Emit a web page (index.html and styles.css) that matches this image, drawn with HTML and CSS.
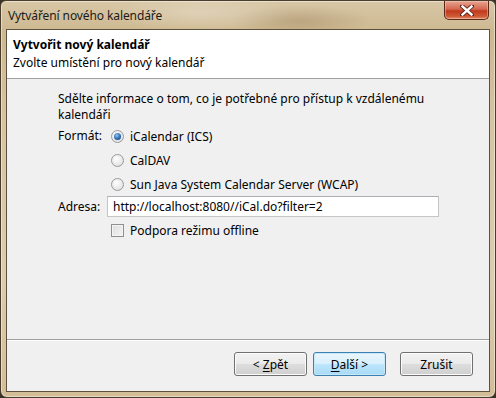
FILE: index.html
```html
<!DOCTYPE html>
<html lang="cs">
<head>
    <meta charset="UTF-8">
    <title>Vytváření nového kalendáře</title>
    <link rel="stylesheet" href="styles.css">
</head>
<body>

    <div class="window">
        <!-- Title bar -->
        <div class="titlebar">
            <span class="title">Vytváření nového kalendáře</span>
            <div class="close">
                <svg width="14" height="11" viewBox="0 0 14 11">
                    <path d="M2 1 L12 10 M12 1 L2 10" stroke="#5a2418" stroke-width="4.2" stroke-linecap="square"/>
                    <path d="M2.5 1.5 L11.5 9.5 M11.5 1.5 L2.5 9.5" stroke="#fff" stroke-width="2.4" stroke-linecap="square"/>
                </svg>
            </div>
        </div>

        <div class="client">
            <!-- Wizard header -->
            <div class="wiz-header">
                <div class="wiz-title">Vytvořit nový kalendář</div>
                <div class="wiz-sub">Zvolte umístění pro nový kalendář</div>
            </div>

            <!-- Page content -->
            <div class="wiz-body">
                <p class="intro">Sdělte informace o tom, co je potřebné pro přístup k vzdálenému kalendáři</p>

                <div class="form">
                    <span class="label fmt">Formát:</span>
                    <div class="options">
                        <div class="opt"><span class="radio checked"></span>iCalendar (ICS)</div>
                        <div class="opt"><span class="radio"></span>CalDAV</div>
                        <div class="opt"><span class="radio"></span>Sun Java System Calendar Server (WCAP)</div>
                    </div>

                    <span class="label">Adresa:</span>
                    <div class="field">http://localhost:8080//iCal.do?filter=2</div>

                    <span></span>
                    <div class="opt check-row"><span class="checkbox"></span>Podpora režimu offline</div>
                </div>
            </div>

            <!-- Buttons -->
            <div class="wiz-footer">
                <button class="btn"><span>&lt; <u>Z</u>pět</span></button>
                <button class="btn default"><span><u>D</u>alší &gt;</span></button>
                <button class="btn cancel">Zrušit</button>
            </div>
        </div>
    </div>

</body>
</html>
```

FILE: styles.css
```css
/* General Reset */
* {
    margin: 0;
    padding: 0;
    box-sizing: border-box;
    font-family: 'Noto Sans', 'Open Sans', sans-serif;
}

body {
    width: 496px;
    height: 398px;
    background: #3b3226;
    overflow: hidden;
    font-size: 12px;
    color: #000;
}

/* Window frame */
.window {
    width: 496px;
    height: 398px;
    display: flex;
    flex-direction: column;
    border: 1px solid #4a3d2c;
    border-radius: 6px 6px 7px 7px;
    padding: 0 5px 5px 5px;
    background:
        radial-gradient(ellipse 90px 20px at 200px 12px, rgba(255, 255, 255, 0.25), transparent),
        radial-gradient(ellipse 70px 16px at 300px 20px, rgba(120, 95, 60, 0.25), transparent),
        linear-gradient(180deg, #d8c7a6 0%, #cdb890 8%, #d6c4a1 30%, #dccdaf 70%, #d2bd96 100%);
    box-shadow: inset 0 0 0 1px rgba(255, 255, 255, 0.45);
}

.titlebar {
    height: 28px;
    display: flex;
    justify-content: space-between;
    align-items: flex-start;
}

.title {
    padding: 6px 0 0 2px;
    font-size: 12px;
    color: #1a1a1a;
    letter-spacing: -0.1px;
}

.close {
    width: 45px;
    height: 19px;
    margin-right: 1px;
    display: flex;
    justify-content: center;
    align-items: center;
    border: 1px solid #5c2a1c;
    border-top: none;
    border-radius: 0 0 5px 5px;
    background: linear-gradient(180deg, #e8a593 0%, #d4684f 45%, #c13a1e 55%, #cf5a35 85%, #e2926e 100%);
    box-shadow: inset 0 0 0 1px rgba(255, 220, 200, 0.4);
}

/* Client area */
.client {
    flex: 1;
    display: flex;
    flex-direction: column;
    background: #f0f0f0;
    border: 1px solid #5e503f;
}

.wiz-header {
    height: 49px;
    background: #fff;
    border-bottom: 1px solid #a0a0a0;
    padding: 6px 0 0 6px;
}

.wiz-title {
    font-weight: bold;
    height: 18px;
    line-height: 18px;
}

.wiz-sub {
    height: 18px;
    line-height: 18px;
}

.wiz-body {
    flex: 1;
    padding: 12px 40px 0 51px;
}

.intro {
    line-height: 16px;
    width: 400px;
}

.form {
    margin-top: 1px;
    display: grid;
    grid-template-columns: 49px 1fr;
    align-items: start;
}

.label {
    line-height: 21px;
}

.label.fmt {
    line-height: 24px;
}

.options {
    display: flex;
    flex-direction: column;
}

.opt {
    height: 24px;
    display: flex;
    align-items: center;
    gap: 6px;
    padding-left: 4px;
}

.radio {
    width: 13px;
    height: 13px;
    border-radius: 50%;
    border: 1px solid #9a9a9a;
    background: radial-gradient(circle at 40% 35%, #ffffff, #e4e4e4 70%, #d0d0d0);
    display: flex;
    justify-content: center;
    align-items: center;
}

.radio.checked::after {
    content: "";
    width: 7px;
    height: 7px;
    border-radius: 50%;
    background: radial-gradient(circle at 40% 35%, #8fc4f0, #2563ad 60%, #173f73);
}

.field {
    width: 332px;
    height: 21px;
    line-height: 19px;
    padding-left: 5px;
    background: #fff;
    border: 1px solid #c5c5c5;
    border-top-color: #abadb3;
}

.check-row {
    margin-top: 1px;
}

.checkbox {
    width: 13px;
    height: 13px;
    border: 1px solid #8f8f8f;
    background: linear-gradient(135deg, #dcdcdc, #f6f6f6);
    box-shadow: inset 0 0 0 1px #f4f4f4;
}

/* Footer */
.wiz-footer {
    height: 52px;
    border-top: 1px solid #a0a0a0;
    box-shadow: inset 0 1px 0 #fff;
    display: flex;
    justify-content: flex-end;
    align-items: flex-start;
    padding: 12px 16px 0 0;
}

.btn {
    width: 73px;
    height: 24px;
    font-size: 12px;
    color: #000;
    border: 1px solid #707070;
    border-radius: 3px;
    background: linear-gradient(180deg, #f2f2f2 0%, #ebebeb 48%, #dddddd 52%, #cfcfcf 100%);
    box-shadow: inset 0 0 0 1px #fcfcfc;
    margin-left: 6px;
}

.btn.default {
    border-color: #3c7fb1;
    background: linear-gradient(180deg, #eaf6fd 0%, #d9f0fc 48%, #bee6fd 52%, #a7d9f5 100%);
    box-shadow: inset 0 0 0 1px #c6e8f9;
}

.btn.cancel {
    margin-left: 14px;
}

.btn u {
    text-decoration: underline;
    text-underline-offset: 2px;
}
```
